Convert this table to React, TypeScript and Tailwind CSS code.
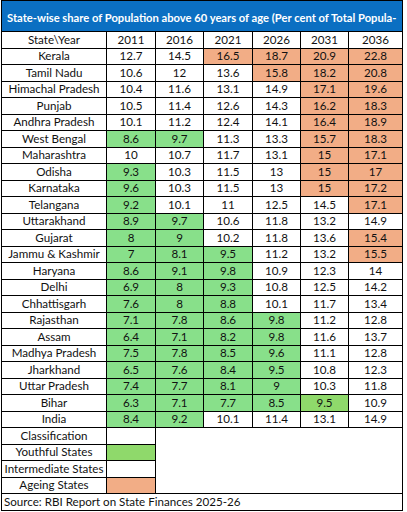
const YEARS = ["2011", "2016", "2021", "2026", "2031", "2036"];

// g = youthful (green), o = ageing (orange), G = brighter green, "" = white
const ROWS: [string, [string, string][]][] = [
  ["Kerala", [["12.7", ""], ["14.5", ""], ["16.5", "o"], ["18.7", "o"], ["20.9", "o"], ["22.8", "o"]]],
  ["Tamil Nadu", [["10.6", ""], ["12", ""], ["13.6", ""], ["15.8", "o"], ["18.2", "o"], ["20.8", "o"]]],
  ["Himachal Pradesh", [["10.4", ""], ["11.6", ""], ["13.1", ""], ["14.9", ""], ["17.1", "o"], ["19.6", "o"]]],
  ["Punjab", [["10.5", ""], ["11.4", ""], ["12.6", ""], ["14.3", ""], ["16.2", "o"], ["18.3", "o"]]],
  ["Andhra Pradesh", [["10.1", ""], ["11.2", ""], ["12.4", ""], ["14.1", ""], ["16.4", "o"], ["18.9", "o"]]],
  ["West Bengal", [["8.6", "g"], ["9.7", "g"], ["11.3", ""], ["13.3", ""], ["15.7", "o"], ["18.3", "o"]]],
  ["Maharashtra", [["10", ""], ["10.7", ""], ["11.7", ""], ["13.1", ""], ["15", "o"], ["17.1", "o"]]],
  ["Odisha", [["9.3", "g"], ["10.3", ""], ["11.5", ""], ["13", ""], ["15", "o"], ["17", "o"]]],
  ["Karnataka", [["9.6", "g"], ["10.3", ""], ["11.5", ""], ["13", ""], ["15", "o"], ["17.2", "o"]]],
  ["Telangana", [["9.2", "g"], ["10.1", ""], ["11", ""], ["12.5", ""], ["14.5", ""], ["17.1", "o"]]],
  ["Uttarakhand", [["8.9", "g"], ["9.7", "g"], ["10.6", ""], ["11.8", ""], ["13.2", ""], ["14.9", ""]]],
  ["Gujarat", [["8", "g"], ["9", "g"], ["10.2", ""], ["11.8", ""], ["13.6", ""], ["15.4", "o"]]],
  ["Jammu & Kashmir", [["7", "g"], ["8.1", "g"], ["9.5", "g"], ["11.2", ""], ["13.2", ""], ["15.5", "o"]]],
  ["Haryana", [["8.6", "g"], ["9.1", "g"], ["9.8", "g"], ["10.9", ""], ["12.3", ""], ["14", ""]]],
  ["Delhi", [["6.9", "g"], ["8", "g"], ["9.3", "g"], ["10.8", ""], ["12.5", ""], ["14.2", ""]]],
  ["Chhattisgarh", [["7.6", "g"], ["8", "g"], ["8.8", "g"], ["10.1", ""], ["11.7", ""], ["13.4", ""]]],
  ["Rajasthan", [["7.1", "g"], ["7.8", "g"], ["8.6", "g"], ["9.8", "g"], ["11.2", ""], ["12.8", ""]]],
  ["Assam", [["6.4", "g"], ["7.1", "g"], ["8.2", "g"], ["9.8", "g"], ["11.6", ""], ["13.7", ""]]],
  ["Madhya Pradesh", [["7.5", "g"], ["7.8", "g"], ["8.5", "g"], ["9.6", "g"], ["11.1", ""], ["12.8", ""]]],
  ["Jharkhand", [["6.5", "g"], ["7.6", "g"], ["8.4", "g"], ["9.5", "g"], ["10.8", ""], ["12.3", ""]]],
  ["Uttar Pradesh", [["7.4", "g"], ["7.7", "g"], ["8.1", "g"], ["9", "g"], ["10.3", ""], ["11.8", ""]]],
  ["Bihar", [["6.3", "g"], ["7.1", "g"], ["7.7", "g"], ["8.5", "g"], ["9.5", "G"], ["10.9", ""]]],
  ["India", [["8.4", "g"], ["9.2", "g"], ["10.1", ""], ["11.4", ""], ["13.1", ""], ["14.9", ""]]],
];

const FILL: Record<string, string> = {
  "": "bg-white",
  g: "bg-[#88e08a]",
  G: "bg-[#8fd96b]",
  o: "bg-[#f2ad86]",
};

const cell =
  "h-[16.5px] border border-black p-0 text-center align-middle leading-[14px]";

export default function App() {
  return (
    <div className="w-[407px] h-[512px] bg-white pl-px font-['Lato','Noto_Sans',sans-serif] text-[11.6px] text-[#111]">
      <table className="w-[401px] table-fixed border-collapse">
        <colgroup>
          <col className="w-[105px]" />
          <col className="w-[49px]" />
          <col className="w-[48px]" />
          <col className="w-[49px]" />
          <col className="w-[48px]" />
          <col className="w-[48px]" />
          <col className="w-[54px]" />
        </colgroup>
        <tbody>
          <tr>
            <td
              colSpan={7}
              className="h-[31px] border border-black bg-[#0b6fc2] pl-[5px] pt-[3px] text-left align-middle text-[11.2px] font-bold leading-none whitespace-nowrap overflow-hidden text-white"
            >
              State-wise share of Population above 60 years of age (Per cent of Total Popula-
            </td>
          </tr>
          <tr>
            <td className={cell}>State\Year</td>
            {YEARS.map((y) => (
              <td key={y} className={cell}>
                {y}
              </td>
            ))}
          </tr>
          {ROWS.map(([name, vals]) => (
            <tr key={name}>
              <td className={`${cell} whitespace-nowrap`}>{name}</td>
              {vals.map(([v, c], i) => (
                <td key={i} className={`${cell} ${FILL[c]}`}>
                  {v}
                </td>
              ))}
            </tr>
          ))}
          <tr>
            <td className={cell}>Classification</td>
            <td className={cell}></td>
            <td rowSpan={4} colSpan={5} className="border border-black"></td>
          </tr>
          <tr>
            <td className={cell}>Youthful States</td>
            <td className={`${cell} bg-[#8fd96b]`}></td>
          </tr>
          <tr>
            <td className={`${cell} whitespace-nowrap`}>Intermediate States</td>
            <td className={cell}></td>
          </tr>
          <tr>
            <td className={cell}>Ageing States</td>
            <td className={`${cell} bg-[#f2ad86]`}></td>
          </tr>
          <tr>
            <td colSpan={7} className={`${cell} pl-[2px] text-left`}>
              Source: RBI Report on State Finances 2025-26
            </td>
          </tr>
        </tbody>
      </table>
    </div>
  );
}
